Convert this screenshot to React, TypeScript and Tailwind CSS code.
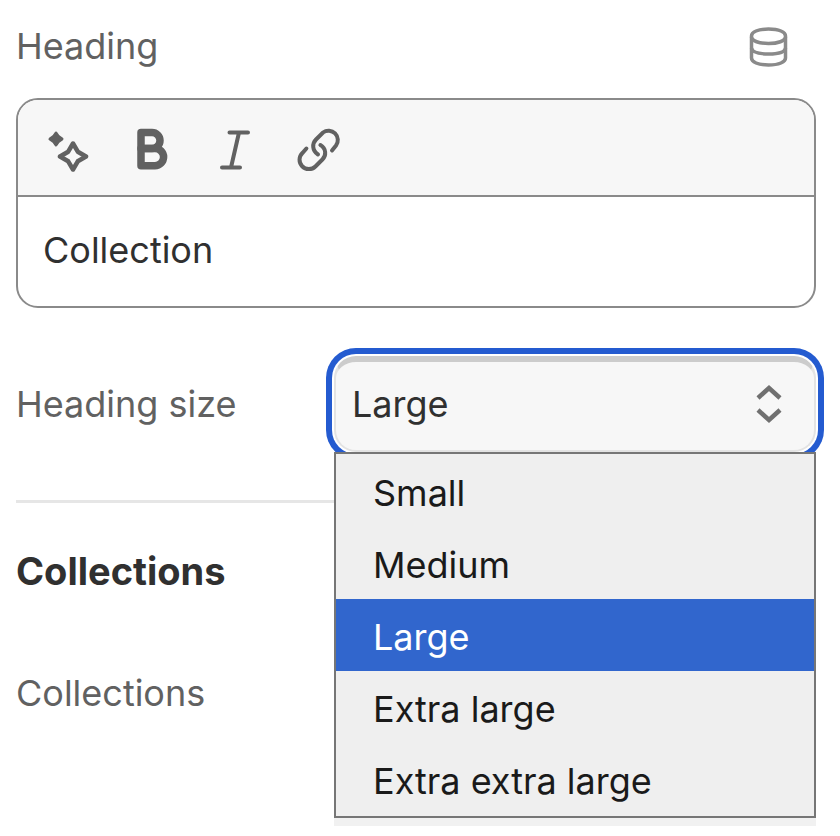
import { useState } from "react";

const SIZES = ["Small", "Medium", "Large", "Extra large", "Extra extra large"];

function DatabaseIcon() {
  return (
    <svg viewBox="0 0 48 48" className="size-12" fill="none" stroke="#8a8a8a" strokeWidth="3.5" aria-hidden="true">
      <path d="M7.500 14C7.500 10 14 7 24.500 7S41.500 10 41.500 14V36C41.500 40 35 43 24.500 43S7.500 40 7.500 36Z" />
      <path d="M7.500 15C8 19 15 21.500 24.500 21.500S41 19 41.500 15" />
      <path d="M7.500 26C8 30 15 32 24.500 32S41 30 41.500 26" />
    </svg>
  );
}

function MagicIcon() {
  return (
    <svg viewBox="0 0 48 48" className="size-12" fill="none" stroke="#616161" strokeLinejoin="round" aria-hidden="true">
      <path d="M13 9L15.500 12.500L19 15L15.500 17.500L13 21L10.500 17.500L7 15L10.500 12.500Z" fill="#616161" strokeWidth="3" />
      <path d="M30 19.500L34.800 27.700L43 32.500L34.800 37.300L30 45.500L25.200 37.300L17 32.500L25.200 27.700Z" strokeWidth="4.500" />
    </svg>
  );
}

function BoldIcon() {
  return (
    <svg viewBox="0 0 48 48" className="size-12" fill="none" stroke="#616161" strokeWidth="7.500" strokeLinejoin="round" aria-hidden="true">
      <path d="M14 8.500H25A8 8 0 0 1 25 24.500H14Z" />
      <path d="M14 24.500H28A8.600 8.600 0 0 1 28 41.700H14Z" />
    </svg>
  );
}

function ItalicIcon() {
  return (
    <svg viewBox="0 0 48 48" className="size-12" fill="none" stroke="#616161" strokeWidth="4" strokeLinecap="round" aria-hidden="true">
      <path d="M18.500 8.500H37M11 43.500H29M28 8.500L20 43.500" />
    </svg>
  );
}

function LinkIcon() {
  return (
    <svg viewBox="0 0 48 48" className="size-12" fill="none" stroke="#616161" strokeWidth="4" strokeLinecap="round" aria-hidden="true">
      <path d="M37 26.500L41 21.500A9.300 9.300 0 0 0 28 8.500L21 15.500C17 19.500 17 26.500 23 30.500" />
      <path d="M11.400 24.500L7.400 29A9.300 9.300 0 0 0 20.400 42.500L27.400 35.500C31.400 31.500 31.400 24.500 25.400 21" />
    </svg>
  );
}

const TOOLS = [
  { label: "Generate text", icon: <MagicIcon /> },
  { label: "Bold", icon: <BoldIcon /> },
  { label: "Italic", icon: <ItalicIcon /> },
  { label: "Link", icon: <LinkIcon /> },
];

export default function App() {
  const [heading, setHeading] = useState("Collection");
  const [size, setSize] = useState("Large");

  return (
    <main className="min-h-screen bg-white pr-6 pl-4 font-['Inter',sans-serif] text-4xl font-[420] text-[#616161]">
      <div className="flex h-[98px] items-center justify-between pr-6 pb-1.5">
        <label htmlFor="heading">Heading</label>
        <button type="button" aria-label="Connect dynamic source">
          <DatabaseIcon />
        </button>
      </div>

      {/* Rich text editor */}
      <div className="overflow-hidden rounded-[22px] border-2 border-[#8a8a8a] bg-white">
        <div className="flex h-[97px] items-center gap-9 border-b-2 border-[#8a8a8a] bg-[#f7f7f7] px-[25px]">
          {TOOLS.map((tool) => (
            <button key={tool.label} type="button" aria-label={tool.label}>
              {tool.icon}
            </button>
          ))}
        </div>
        <input
          id="heading"
          value={heading}
          onChange={(e) => setHeading(e.target.value)}
          className="block h-[109px] w-full px-[25px] pb-1 text-[#303030] outline-none"
        />
      </div>

      {/* Heading size */}
      <div className="mt-12 flex items-center">
        <label htmlFor="heading-size" className="w-[318px] shrink-0">
          Heading size
        </label>
        <div className="relative min-w-0 flex-1">
          <select
            id="heading-size"
            value={size}
            onChange={(e) => setSize(e.target.value)}
            className="block h-24 w-full appearance-none rounded-[22px] border-2 border-t-6 border-[#e3e3e3] border-t-[#cccccc] bg-[#f7f7f7] px-4 pb-1 leading-[56px] text-[#303030] ring-6 ring-[#245bd0] ring-offset-2 outline-none"
          >
            {SIZES.map((s) => (
              <option key={s}>{s}</option>
            ))}
          </select>
          <svg viewBox="0 0 28 40" className="pointer-events-none absolute top-7 right-[34px] h-10 w-7" fill="none" stroke="#707070" strokeWidth="4.500" aria-hidden="true">
            <path d="M4 14L15 4L26 14M4 26L15 36L26 26" />
          </svg>
          <div role="listbox" aria-label="Heading size" className="absolute inset-x-0 top-24 z-10 border-2 border-[#767676] bg-[#efefef] py-px">
            {SIZES.map((s) => (
              <button
                key={s}
                type="button"
                role="option"
                aria-selected={s === size}
                onClick={() => setSize(s)}
                className={`block h-[72px] w-full pt-1 pl-[37px] text-left ${s === size ? "bg-[#3166cd] text-white" : "text-[#1a1a1a]"}`}
              >
                {s}
              </button>
            ))}
          </div>
        </div>
      </div>

      <hr className="mt-12 border-t-3 border-[#e6e6e6]" />

      {/* Collections */}
      <h2 className="mt-12 text-[38px] leading-10 font-bold text-[#303030]">Collections</h2>
      <div className="mt-16 flex items-start pb-2.5">
        <span className="w-[318px] shrink-0 pt-[18px]">Collections</span>
        <button type="button" aria-label="Select collections" className="h-[171px] min-w-0 flex-1 bg-[#f1f1f1]" />
      </div>
    </main>
  );
}
